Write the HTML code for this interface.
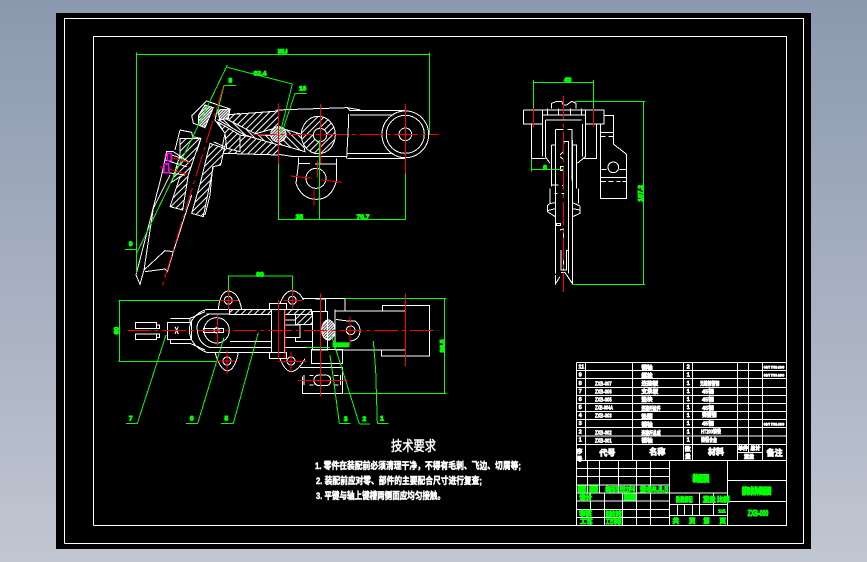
<!DOCTYPE html>
<html><head><meta charset="utf-8"><style>
html,body{margin:0;padding:0;width:867px;height:562px;overflow:hidden;background:linear-gradient(180deg,#8b99af 0%,#c1c6d1 100%)}
svg{position:absolute;left:0;top:0;display:block}
.w{fill:none;stroke:#fff;stroke-width:3;shape-rendering:crispEdges}
.g{fill:none;stroke:#0f0;stroke-width:3;shape-rendering:crispEdges}
.r{fill:none;stroke:#f00;stroke-width:3;shape-rendering:crispEdges}
.rd{fill:none;stroke:#f00;stroke-width:3;stroke-dasharray:70 12 12 12;shape-rendering:crispEdges}
.h{stroke:#fff;stroke-width:3;fill:url(#hat);shape-rendering:crispEdges}
.h2{stroke:#fff;stroke-width:3;fill:url(#hat2);shape-rendering:crispEdges}
.h3{stroke:#fff;stroke-width:3;fill:url(#hat3);shape-rendering:crispEdges}
text{font-family:"Liberation Sans","Noto Sans CJK SC",sans-serif;font-weight:700}
.gt{fill:#0f0;stroke:#0f0;stroke-width:3;font-size:20px;text-anchor:middle}
.wt{fill:#fff;stroke:#fff;stroke-width:2;font-size:17px}
.gb{fill:#0f0;stroke:#0f0;stroke-width:3;font-size:19px}
</style></head><body>
<svg width="867" height="562" viewBox="0 0 867 562">
<defs>
<pattern id="hat" width="14" height="14" patternUnits="userSpaceOnUse" patternTransform="rotate(45)"><rect width="14" height="14" fill="#000"/><rect width="3" height="14" fill="#fff"/></pattern>
<pattern id="hat2" width="14" height="14" patternUnits="userSpaceOnUse" patternTransform="rotate(-45)"><rect width="14" height="14" fill="#000"/><rect width="3" height="14" fill="#fff"/></pattern>
<pattern id="hat3" width="6" height="6" patternUnits="userSpaceOnUse" patternTransform="rotate(45)"><rect width="6" height="6" fill="#000"/><rect width="4" height="6" fill="#fff"/></pattern>
</defs>
<rect x="56" y="13" width="755" height="536" fill="#000"/>
<path d="M64.5 543.5V18.5H803.5V543.5H64.5M93.5 525.5V36.5H786.5V525.5H93.5" fill="none" stroke="#fff" shape-rendering="crispEdges"/>

<!-- top-left view -->
<g transform="translate(110,40) scale(.33333)">
<path class="h" d="M345 225L505 213V262L430 283L345 235Z"/>
<path class="h2" d="M325 240L400 283L505 320V290L440 283L345 235Z"/>
<path class="h" d="M340 340L505 345V315L420 290L355 280Z"/>
<path class="h2" d="M505 262L575 283L585 335L505 312Z"/>
<ellipse class="h" cx="625" cy="285" rx="51" ry="56"/>
<circle cx="630" cy="285" r="20" fill="#000" stroke="#fff" stroke-width="3"/>
<circle class="h3" cx="505" cy="283" r="23"/>
<path class="w" d="M500 210L555 208L712 203L752 210M712 203L720 212H886M720 225H850M716 222V240L710 355M505 343L552 350H710M712 340H850M712 355H886"/>
<circle class="w" cx="886" cy="283" r="70"/><circle class="w" cx="886" cy="283" r="57"/><circle class="w" cx="886" cy="283" r="19"/>
<path class="w" d="M565 352V375L558 430Q575 478 620 478Q665 478 680 420V355M565 370H600M615 372H680"/>
<circle class="w" cx="618" cy="415" r="30"/>
</g>

<!-- blade detail -->
<g transform="translate(130,95) scale(.33333)">
<path class="h" d="M150 130L212 130L175 240L158 345L120 335L150 245L125 262L150 180Z"/>
<path class="h" d="M240 145L283 160L272 210L250 215L220 365L185 355L212 260Z"/>
<path class="h3" d="M205 62L225 30L250 38L225 98L205 90Z"/>
<path class="h3" d="M262 45L300 42L295 70L270 75Z"/>
<path class="h" d="M262 80L330 120V170L290 160L285 115Z"/>
<path class="w" d="M18 540L30 568L42 525L105 467L130 470L185 300M18 540L95 240L110 170H130L175 200M42 525L70 340L120 240M110 175L170 195M105 195L170 215M105 232L165 240M45 530L105 522L112 530L130 470M150 105L185 112L188 125L213 130L200 170M150 105L135 165M185 62L230 18L300 42L295 60L330 55M185 62L190 85L205 90M250 140L283 155M262 45L255 75L285 115L275 165M225 360L240 300L248 215"/>
</g>

<g transform="translate(110,40) scale(.33333)">
<path class="g" d="M80 700V38M80 43H958M958 38V285M352 75L80 640M352 82L547 132M547 132L510 280M590 160H555L520 265M378 136H342L320 225M45 628H80M506 360V540M628 300V540M886 400V540M506 539H886M355 748V708H547V748"/>
<path class="r" d="M505 190V370M631 192V370M886 192V400M622 362V412M612 448V497M543 408L605 415M636 420L695 427M160 347L240 368M150 380L232 403"/>
<path class="rd" d="M430 283H985M340 140L157 738"/>
<path d="M172 340h12v22h-12zM162 372h14v26h-14z" fill="#000" stroke="#f0f" stroke-width="5"/>
<text class="gt" x="518" y="41" textLength="30" lengthAdjust="spacingAndGlyphs">308.6</text>
<text class="gt" x="450" y="107">62.4</text><text class="gt" x="578" y="152">16</text><text class="gt" x="361" y="127">8</text><text class="gt" x="62" y="618">9</text><text class="gt" x="568" y="537">35</text><text class="gt" x="759" y="537">70.7</text>
</g>

<!-- right view -->
<g transform="translate(500,60) scale(.33333)">
<path class="w" d="M70 150H312V192H256V150M70 150V192H128V150M142 145V165H175V145M212 145V165H245V145M155 145V130L170 124H185L190 135H200L215 124L228 130V145M128 165H256M136 180H245M128 192V290M136 180V290L150 310M248 192V290M256 180V290L232 310M94 192V296H136M290 192V296H248M166 208H190M202 208H216V362M166 208V640M154 255H166M154 255V380M218 255H230V385M150 385V430M236 385V430M142 440Q142 430 166 428M142 440V455L166 470M240 438L218 428M240 438V460L218 470M142 452L166 446M240 450L218 446M192 245H205V640M192 245V250M218 240V672M180 510L190 507V630M183 570V630H199V572L205 570M166 645V672L180 650M218 672L200 645L195 638H183M180 285L190 275M180 290L190 298M170 490H182V497H170ZM182 320H190V332H182Z"/>
<path class="w" d="M311 166H340V252L380 283V416H301V192M301 217H340M301 352H380M320 328H304M358 328H380"/>
<path class="w" d="M302 230H316M325 230H340M302 365H318M326 365H340M350 365H362M368 365H380M156 375H175M186 377H192M164 400H172M184 400H192"/>
<circle class="w" cx="340" cy="322" r="16"/>
<path class="g" d="M100 60V190M280 60V190M100 67H280M94 296V335M94 328H190M225 124H435M431 124V674M218 673H435"/>
<path class="r" d="M100 145V202M280 145V200"/>
<path class="rd" d="M190 108V696"/>
<text class="gt" x="203" y="66">40</text><text class="gt" x="135" y="328">6</text>
<text class="gt" transform="translate(428,400) rotate(-90)">107.2</text>
</g>

<!-- bottom view -->
<g transform="translate(110,260) scale(.33333)">
<path class="h" d="M358 148H484V163H358Z"/><path class="h" d="M525 148H605V163H525Z"/><path class="h" d="M557 163H607V193H557Z"/>
<ellipse class="h3" cx="655" cy="210" rx="20" ry="30"/>
<path class="w" d="M77 187H140V205H77ZM77 222H140V238H77ZM140 195H148V205H140ZM140 222H148V232H140ZM172 187H245V238H172ZM182 175H240V187M182 238V250H240M240 175L285 155M240 250L285 270M195 200L205 222M205 200L195 222"/>
<path class="w" d="M290 148H485M290 277H485M290 148Q240 165 238 211Q240 258 290 277M290 162H358M298 162Q255 180 262 211Q265 250 298 262H485M360 244H485"/>
<circle class="w" cx="320" cy="211" r="38"/><circle class="w" cx="320" cy="211" r="8"/>
<path class="w" d="M280 205H340V218H280ZM325 148Q330 95 355 93Q385 95 395 148M315 277Q330 330 352 333Q375 330 385 277M510 130Q525 92 547 92Q570 95 580 120M510 296Q525 333 543 335Q565 333 585 296"/>
<circle class="w" cx="355" cy="121" r="12"/><circle class="w" cx="351" cy="303" r="12"/><circle class="w" cx="547" cy="121" r="12"/><circle class="w" cx="543" cy="303" r="12"/>
<path class="w" d="M484 148V277H524V148ZM478 130H530V148H478ZM478 277H530V296H478ZM524 195H570V232H524ZM525 180H557V195M525 232H557V245H607M525 262H607M578 115H705V153M616 117H646V155M607 155H653V270H607ZM604 268H698V310H604ZM675 148V265M675 153H886M675 270H886M817 153V136H958V288H815V270M678 178Q720 185 735 183Q750 195 750 211Q750 240 720 243M570 322H698V400H578V350M612 361Q612 345 630 345H645Q662 345 662 361Q662 377 645 377H630Q612 377 612 361ZM582 345V375M692 345V375M598 347H610M672 347H686M598 375H610M672 375H686"/>
<circle class="w" cx="722" cy="211" r="13"/>
<path class="g" d="M355 120V48H547V110M25 121H335M28 121V304M25 304H320M705 115H1010M1004 115V400M700 400H1010M48 490H82L168 225M228 490H263L342 232M333 490H370L445 218M688 490H722M688 490L672 370L660 285M748 492H780M748 492L665 228M802 490H836M802 490L797 330L790 243M590 262H660"/>
<path class="r" d="M355 90V150M330 121H385M351 270V340M320 303H375M547 88V145M520 121H575M543 275V338M505 304H590M322 165V258M505 120V295M525 150V295M631 100V410M886 100V318M720 170V255M562 361H712"/>
<path class="rd" d="M52 211H985"/>
<rect x="668" y="247" width="50" height="15" fill="#0f0"/>
<text class="gt" x="450" y="50">80</text><text class="gt" x="62" y="481">7</text><text class="gt" x="245" y="482">6</text><text class="gt" x="349" y="482">5</text><text class="gt" x="707" y="483">3</text><text class="gt" x="763" y="483">2</text><text class="gt" x="816" y="481">1</text>
<text class="gt" transform="translate(25,212) rotate(-90)">60</text>
<text class="gt" transform="translate(1003,258) rotate(-90)">86.5</text>
</g>

<!-- technical requirements -->
<text x="391" y="451" fill="#fff" style="font-size:14px;font-weight:400" textLength="45" lengthAdjust="spacingAndGlyphs" stroke="#fff" stroke-width=".5">技术要求</text>
<g fill="#fff" stroke="#fff" stroke-width=".5" style="font-size:9.5px">
<text x="315" y="469" textLength="206" lengthAdjust="spacingAndGlyphs">1. 零件在装配前必须清理干净，不得有毛刺、飞边、切屑等;</text>
<text x="316" y="484" textLength="166" lengthAdjust="spacingAndGlyphs">2. 装配前应对零、部件的主要配合尺寸进行复查;</text>
<text x="316" y="499" textLength="129" lengthAdjust="spacingAndGlyphs">3. 平键与轴上键槽两侧面应均匀接触。</text>
</g>

<!-- title block -->
<g transform="translate(570,355) scale(.33333)">
<path class="w" d="M19 22H649M19 46H649M19 70H649M19 97H649M19 121H649M19 145H649M19 169H649M19 193H649M19 217H649M19 243H649M19 268H649M19 316H649M19 22V511M46 22V316M187 22V316M340 22V316M367 22V316M502 22V316M535 22V292M577 22V316M502 292H577"/>
<path class="w" d="M19 340H298M19 364H298M19 390H298M19 414H298M19 438H298M19 463H298M19 487H298M19 511H649M52 316V414M88 316V414M145 316V414M199 316V511M241 316V511M298 316V511M61 414V511M103 414V511M157 414V511M472 316V511M298 414H472M298 448H472M298 481H472M388 414V481M430 414V481M322 448V481M344 448V481M367 448V481M472 376H649M472 439H649"/>
<g class="wt">
<text x="25" y="40">11</text><text x="26" y="64">9</text><text x="26" y="90">8</text><text x="26" y="114">7</text><text x="26" y="138">6</text><text x="26" y="162">5</text><text x="26" y="186">4</text><text x="26" y="210">3</text><text x="26" y="236">2</text><text x="26" y="260">1</text>
<text x="75" y="91" textLength="50" lengthAdjust="spacingAndGlyphs">ZXB-007</text><text x="75" y="115" textLength="50" lengthAdjust="spacingAndGlyphs">ZXB-006</text><text x="75" y="139" textLength="50" lengthAdjust="spacingAndGlyphs">ZXB-005</text><text x="75" y="163" textLength="54" lengthAdjust="spacingAndGlyphs">ZXB-004A</text><text x="75" y="187" textLength="50" lengthAdjust="spacingAndGlyphs">ZXB-003</text><text x="75" y="238" textLength="50" lengthAdjust="spacingAndGlyphs">ZXB-002</text><text x="75" y="262" textLength="50" lengthAdjust="spacingAndGlyphs">ZXB-001</text>
<text x="214" y="43">销轴</text><text x="214" y="68">螺栓</text><text x="214" y="92">连接板</text><text x="214" y="116">支承板</text><text x="214" y="140">垫块</text><text x="214" y="166" textLength="58" lengthAdjust="spacingAndGlyphs">连接杆组件</text><text x="214" y="191">垫圈</text><text x="214" y="215">销轴</text><text x="214" y="240" textLength="58" lengthAdjust="spacingAndGlyphs">连接杆总成</text><text x="214" y="263">销轴</text>
<text x="350" y="40">2</text><text x="350" y="64">1</text><text x="350" y="90">1</text><text x="350" y="114">1</text><text x="350" y="138">1</text><text x="350" y="162">1</text><text x="350" y="186">1</text><text x="350" y="210">1</text><text x="350" y="236">1</text><text x="350" y="260">1</text>
<text x="390" y="91" textLength="58" lengthAdjust="spacingAndGlyphs">无缝钢管钢</text><text x="396" y="116">45钢</text><text x="396" y="140">45钢</text><text x="396" y="165">45钢</text><text x="396" y="186" textLength="44" lengthAdjust="spacingAndGlyphs">弹簧钢</text><text x="396" y="211">45钢</text><text x="393" y="236" textLength="60" lengthAdjust="spacingAndGlyphs">HT200铸铁</text><text x="393" y="261" textLength="48" lengthAdjust="spacingAndGlyphs">铸铝合金</text>
<text x="581" y="40" textLength="62" lengthAdjust="spacingAndGlyphs" style="font-size:12px">GB/T 5782-2000</text><text x="581" y="64" textLength="62" lengthAdjust="spacingAndGlyphs" style="font-size:12px">GB/T 5783-2000</text><text x="581" y="211" textLength="62" lengthAdjust="spacingAndGlyphs" style="font-size:12px">GB/T 5782-2000</text>
</g>
<g fill="#fff" stroke="#fff" stroke-width="2.5" style="font-size:24px">
<text x="20" y="296" style="font-size:17px">序</text><text x="20" y="318" style="font-size:17px">号</text><text x="88" y="301">代号</text><text x="238" y="298">名称</text><text x="345" y="288" style="font-size:17px">数</text><text x="345" y="310" style="font-size:17px">量</text><text x="414" y="299">材料</text><text x="504" y="285" style="font-size:15px">单件</text><text x="541" y="285" style="font-size:15px">总计</text><text x="522" y="310" style="font-size:15px">重量</text><text x="590" y="302">备注</text>
</g>
<g class="gb">
<rect x="24" y="393" width="24" height="19" fill="#0f0"/><rect x="59" y="393" width="24" height="19" fill="#0f0"/><rect x="162" y="417" width="35" height="18" fill="#0f0"/>
<text x="106" y="409">标记</text><text x="148" y="409" textLength="48" lengthAdjust="spacingAndGlyphs">更改文件号</text><text x="210" y="409">签名</text><text x="246" y="409" textLength="50" lengthAdjust="spacingAndGlyphs">年.月.日</text>
<text x="28" y="433">设计</text><text x="27" y="482">审核</text><text x="107" y="483" textLength="48" lengthAdjust="spacingAndGlyphs">标准化审核</text><text x="30" y="506">工艺</text><text x="107" y="506" textLength="48" lengthAdjust="spacingAndGlyphs">工艺审核</text>
<text x="318" y="439" textLength="50" lengthAdjust="spacingAndGlyphs">阶段标记</text><text x="399" y="439">重量</text><text x="441" y="439">比例</text><text x="445" y="473" style="font-size:15px">1:1</text>
<text x="308" y="504">共</text><text x="357" y="504">页</text><text x="400" y="504">第</text><text x="449" y="504">页</text>
<text x="368" y="380" style="font-size:26px" stroke-width="4" textLength="50" lengthAdjust="spacingAndGlyphs">装配图</text>
<text x="516" y="417" style="font-size:26px" stroke-width="4" textLength="88" lengthAdjust="spacingAndGlyphs">抓取机构装配图</text>
<text x="533" y="483" style="font-size:24px" stroke-width="3" textLength="62" lengthAdjust="spacingAndGlyphs">ZXB-000</text>
</g>
</g>
</svg>
</body></html>
